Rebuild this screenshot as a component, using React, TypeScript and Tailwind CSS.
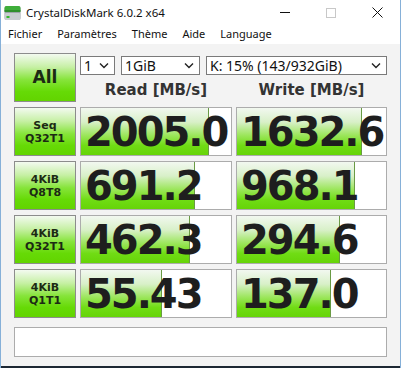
import React from "react";

type Row = {
  l1: string;
  l2: string;
  read: string;
  rp: number;
  write: string;
  wp: number;
};

const rows: Row[] = [
  { l1: "Seq", l2: "Q32T1", read: "2005.0", rp: 85, write: "1632.6", wp: 84 },
  { l1: "4KiB", l2: "Q8T8", read: "691.2", rp: 76, write: "968.1", wp: 79 },
  { l1: "4KiB", l2: "Q32T1", read: "462.3", rp: 72.7, write: "294.6", wp: 69 },
  { l1: "4KiB", l2: "Q1T1", read: "55.43", rp: 54, write: "137.0", wp: 63 },
];

const greenBtn =
  "border border-[#8c8c8c] bg-[linear-gradient(to_bottom,#f3faf0_0%,#c6f0a4_28%,#86e43a_55%,#66da06_80%,#62d400_100%)] text-[#1c2a14] font-bold font-['DejaVu_Sans',sans-serif] flex flex-col items-center justify-center";

function Chevron() {
  return (
    <svg width="10" height="7" viewBox="0 0 10 7" className="shrink-0">
      <polyline points="1,1.5 5,5.5 9,1.5" fill="none" stroke="#222" strokeWidth="1.4" />
    </svg>
  );
}

function Select({ text, className }: { text: string; className: string }) {
  return (
    <div
      className={`h-[19px] bg-white border border-[#7a7a7a] flex items-center justify-between pl-[3px] pr-[5px] text-[14px] text-[#111] font-['Noto_Sans',sans-serif] leading-none ${className}`}
    >
      <span>{text}</span>
      <Chevron />
    </div>
  );
}

function Result({ value, pct, w }: { value: string; pct: number; w: string }) {
  return (
    <div className={`relative h-[49px] ${w} border border-[#acacac] bg-white overflow-hidden`}>
      <div
        className="absolute left-0 top-0 bottom-0 border-r border-[#6a9a44] bg-[linear-gradient(to_bottom,#f2f8f0_0%,#d8f0c8_30%,#9ce65c_58%,#70dc14_80%,#66d408_100%)]"
        style={{ width: `${pct}%` }}
      />
      <div className="relative h-full flex items-center pl-[4px] text-[40px] leading-none tracking-[-2px] font-bold text-[#1e1e1e] font-['DejaVu_Sans',sans-serif]">
        {value}
      </div>
    </div>
  );
}

export default function App() {
  return (
    <div className="w-[401px] h-[368px] flex flex-col bg-white border-x border-[#86b0d8] overflow-hidden">
      {/* title bar */}
      <div className="h-[25px] shrink-0 flex items-center bg-white relative">
        <svg width="17" height="16" viewBox="0 0 17 16" className="ml-[3px]">
          <rect x="0.5" y="1" width="16" height="14" rx="2" fill="#9aa2a8" />
          <rect x="0.5" y="1" width="16" height="6" rx="2" fill="#3fae3a" />
          <rect x="0.5" y="5" width="16" height="2" fill="#2e8f2c" />
          <rect x="0.5" y="8" width="16" height="7" rx="1.5" fill="#c7ccd0" />
          <rect x="2.5" y="11" width="3" height="2" fill="#35b82f" />
        </svg>
        <span className="ml-[5px] text-[11.5px] text-[#111] font-['Noto_Sans',sans-serif]">
          CrystalDiskMark 6.0.2 x64
        </span>
        <div className="ml-auto flex items-center h-full">
          <div className="w-[46px] h-full flex items-center justify-center">
            <div className="w-[10px] h-px bg-[#111]" />
          </div>
          <div className="w-[46px] h-full flex items-center justify-center">
            <div className="w-[10px] h-[10px] border border-[#c8c8c8]" />
          </div>
          <div className="w-[46px] h-full flex items-center justify-center">
            <svg width="11" height="11" viewBox="0 0 11 11">
              <path d="M0.5 0.5 L10.5 10.5 M10.5 0.5 L0.5 10.5" stroke="#111" strokeWidth="1" />
            </svg>
          </div>
        </div>
      </div>

      {/* menu */}
      <div className="h-[19px] shrink-0 flex items-center bg-white pl-[7px] gap-[15px] text-[11px] text-[#111] font-['Noto_Sans',sans-serif]">
        <span>Fichier</span>
        <span>Paramètres</span>
        <span>Thème</span>
        <span>Aide</span>
        <span>Language</span>
      </div>

      {/* client */}
      <div className="flex-1 bg-[#f3f3f3] pl-[13px] pt-[9px]">
        <div className="flex gap-[4px]">
          <div className={`w-[62px] h-[49px] text-[17px] ${greenBtn}`}>All</div>
          <div className="flex flex-col">
            <div className="flex gap-[6px] mt-[3px]">
              <Select text="1" className="w-[35px]" />
              <Select text="1GiB" className="w-[79px]" />
              <Select text="K: 15% (143/932GiB)" className="w-[181px]" />
            </div>
            <div className="flex gap-[4px] pt-[8px] text-[15px] font-bold text-[#333] font-['DejaVu_Sans',sans-serif] leading-none">
              <div className="w-[152px] text-center">Read [MB/s]</div>
              <div className="w-[151px] text-center">Write [MB/s]</div>
            </div>
          </div>
        </div>

        <div className="flex flex-col gap-[5px] mt-[5px]">
          {rows.map((r, i) => (
            <div key={i} className="flex gap-[4px]">
              <div className={`w-[62px] h-[49px] text-[11px] leading-[13px] ${greenBtn}`}>
                <span>{r.l1}</span>
                <span>{r.l2}</span>
              </div>
              <Result value={r.read} pct={r.rp} w="w-[152px]" />
              <Result value={r.write} pct={r.wp} w="w-[151px]" />
            </div>
          ))}
        </div>

        <div className="mt-[9px] w-[373px] h-[30px] bg-white border border-[#acacac]" />
      </div>
      <div className="h-[2px] shrink-0 bg-[#1d2833]" />
    </div>
  );
}
